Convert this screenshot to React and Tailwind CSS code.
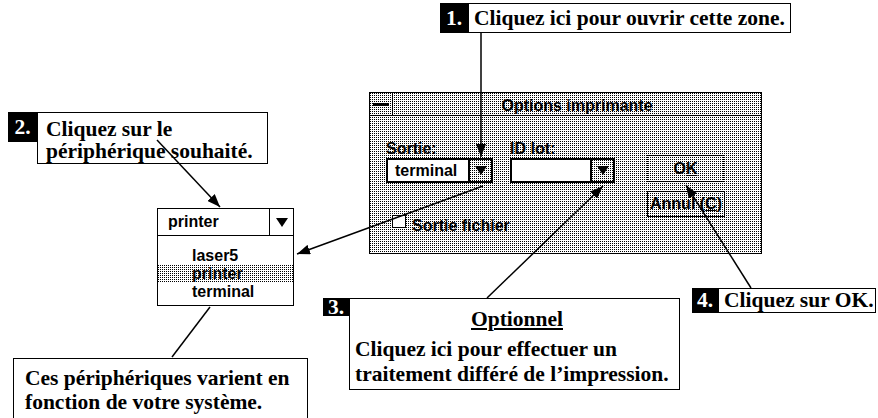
import React from "react";

// trame grise (1 point noir sur 4) façon vieux Mac
const dither =
  "bg-black bg-[image:linear-gradient(90deg,transparent_1px,#fff_1px),linear-gradient(transparent_1px,#fff_1px)] bg-[length:2px_2px]";

const serif = "font-['Liberation_Serif','Times_New_Roman',serif] font-bold text-[21.5px] text-black";
const sans = "font-['Liberation_Sans',Arial,sans-serif] font-bold text-[16px] text-black";

const Tri = () => (
  <svg width="12" height="9" viewBox="0 0 12 9">
    <path d="M0 0h12L6 9z" fill="#000" />
  </svg>
);

const Combo = ({ value, widthClass, btnClass }) => (
  <div className={`flex h-[25px] border-2 border-black ${widthClass}`}>
    <div className="flex-1 bg-white pl-[7px] leading-[21px]">{value}</div>
    <div className={`flex w-[23px] items-center justify-center border-l-2 border-black ${btnClass}`}>
      <Tri />
    </div>
  </div>
);

const Label = ({ children, className }) => (
  <div className={`flex shrink-0 items-center justify-center bg-black text-white ${className}`}>{children}</div>
);

export default function App() {
  return (
    <div className={`relative h-[418px] w-[878px] overflow-hidden bg-white ${serif}`}>
      {/* Callout 1 */}
      <div className="absolute left-[440px] top-[3px] flex h-[30px]">
        <Label className="w-[28px]">1.</Label>
        <div className="w-[323px] border border-black bg-white pl-[5px] leading-[28px] whitespace-nowrap">Cliquez ici pour ouvrir cette zone.</div>
      </div>

      {/* Callout 2 */}
      <div className="absolute left-[8px] top-[112px] flex items-start">
        <Label className="h-[30px] w-[29px]">2.</Label>
        <div className="h-[52px] w-[231px] border border-black bg-white pl-[8px] pt-[5px] leading-[22px]">
          <div>Cliquez sur le</div>
          <div>périphérique souhaité.</div>
        </div>
      </div>

      {/* Liste déroulante ouverte */}
      <div className={`absolute left-[157px] top-[208px] h-[98px] w-[137px] border-[1.5px] border-black bg-white ${sans}`}>
        <div className="flex h-[27px] border-b-[1.5px] border-black">
          <div className="flex-1 pl-[10px] leading-[25px]">printer</div>
          <div className="flex w-[24px] items-center justify-center border-l-[1.5px] border-black">
            <Tri />
          </div>
        </div>
        <div className="flex flex-col pt-[11px] leading-[18px]">
          <div className="pl-[34px]">laser5</div>
          <div className={`pl-[34px] ${dither}`}>printer</div>
          <div className="pl-[34px]">terminal</div>
        </div>
      </div>

      {/* Boîte de dialogue */}
      <div className={`absolute left-[369px] top-[92px] h-[162px] w-[393px] border-[1.5px] border-black ${dither} ${sans}`}>
        <div className="flex h-[23px] border-b-[1.5px] border-black">
          <div className="flex w-[23px] items-center justify-center border-r-[1.5px] border-black">
            <div className="h-[3px] w-[16px] bg-black" />
          </div>
          <div className="flex-1 text-center leading-[25px]">Options imprimante</div>
        </div>
        <div className="flex pl-[16px] pt-[24px]">
          <div className="flex flex-col">
            <div className="flex gap-[17px]">
              <div className="flex flex-col">
                <div className="mb-[1px] h-[17px] leading-[17px]">Sortie:</div>
                <Combo value="terminal" widthClass="w-[107px]" btnClass={dither} />
              </div>
              <div className="flex flex-col">
                <div className="mb-[1px] h-[17px] leading-[17px]">ID lot:</div>
                <Combo value="" widthClass="w-[105px]" btnClass={dither} />
              </div>
            </div>
            <div className="ml-[6px] mt-[32px] flex items-start gap-[6px]">
              <div className="h-[13px] w-[14px] border border-black bg-white" />
              <div className="mt-[2px] leading-[18px]">Sortie fichier</div>
            </div>
          </div>
          <div className="ml-[32px] mt-[15px] flex flex-col gap-[9px]">
            <div className="flex h-[27px] w-[77px] items-center justify-center border border-dotted border-black">
              O<span className="underline">K</span>
            </div>
            <div className="flex h-[26px] w-[78px] items-center justify-center border border-black whitespace-nowrap">
              Annul (<span className="underline">C</span>)
            </div>
          </div>
        </div>
      </div>

      {/* Callout 3 */}
      <div className="absolute left-[323px] top-[298px] flex items-start">
        <Label className="h-[18px] w-[26px]">3.</Label>
        <div className="h-[92px] w-[331px] border border-black bg-white pl-[5px] pt-[8px] whitespace-nowrap">
          <div className="text-center leading-[25px] underline">Optionnel</div>
          <div className="mt-[5px] leading-[25px]">
            <div>Cliquez ici pour effectuer un</div>
            <div>traitement différé de l’impression.</div>
          </div>
        </div>
      </div>

      {/* Callout 4 */}
      <div className="absolute left-[692px] top-[288px] flex h-[25px]">
        <Label className="w-[26px]">4.</Label>
        <div className="w-[158px] border border-black bg-white pl-[5px] leading-[23px] whitespace-nowrap">Cliquez sur OK.</div>
      </div>

      {/* Note */}
      <div className="absolute left-[13px] top-[358px] h-[70px] w-[295px] border border-black bg-white pl-[11px] pt-[7px] leading-[24px] whitespace-nowrap">
        <div>Ces périphériques varient en</div>
        <div>fonction de votre système.</div>
      </div>

      {/* Flèches */}
      <svg className="pointer-events-none absolute inset-0" width="878" height="418" viewBox="0 0 878 418">
        <defs>
          <marker id="ah" markerWidth="13" markerHeight="10" refX="13" refY="5" orient="auto" markerUnits="userSpaceOnUse">
            <path d="M0 0L13 5L0 10z" fill="#000" />
          </marker>
        </defs>
        <g stroke="#000" strokeWidth="1.5" fill="none">
          <line x1="481" y1="33" x2="481" y2="157" markerEnd="url(#ah)" />
          <line x1="157" y1="140" x2="220" y2="207" markerEnd="url(#ah)" />
          <line x1="483" y1="186" x2="297" y2="254" markerEnd="url(#ah)" />
          <line x1="487" y1="298" x2="603" y2="186" markerEnd="url(#ah)" />
          <line x1="751" y1="288" x2="686" y2="185" markerEnd="url(#ah)" />
          <line x1="210" y1="307" x2="172" y2="357" />
        </g>
      </svg>
    </div>
  );
}
